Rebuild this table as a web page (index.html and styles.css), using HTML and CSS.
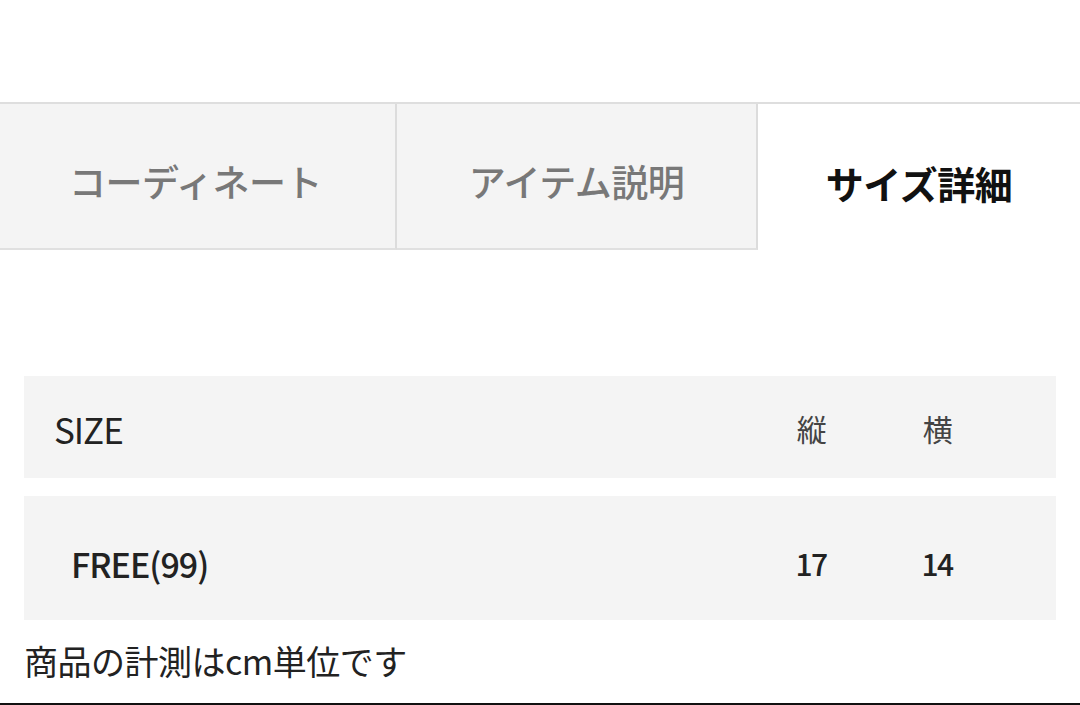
FILE: index.html
```html
<!DOCTYPE html>
<html lang="ja">
<head>
<meta charset="utf-8">
<link rel="stylesheet" href="styles.css">
</head>
<body>
<div class="page">
  <div class="top"></div>
  <div class="tabs">
    <div class="tab tab-1">コーディネート</div>
    <div class="tab tab-2">アイテム説明</div>
    <div class="tab tab-active">サイズ詳細</div>
  </div>
  <div class="content">
    <div class="table">
      <div class="row row-head">
        <div class="cell cell-name">SIZE</div>
        <div class="cell cell-num">縦</div>
        <div class="cell cell-num">横</div>
      </div>
      <div class="row row-body">
        <div class="cell cell-name cell-indent">FREE(99)</div>
        <div class="cell cell-num">17</div>
        <div class="cell cell-num">14</div>
      </div>
    </div>
    <p class="note">商品の計測はcm単位です</p>
  </div>
</div>
</body>
</html>
```
FILE: styles.css
```css
* { box-sizing: border-box; }
html, body { margin: 0; padding: 0; background: #fff; }
body {
  width: 1080px;
  height: 705px;
  overflow: hidden;
  font-family: "Noto Sans CJK JP", "Noto Sans", sans-serif;
  color: #222;
}
.page {
  height: 705px;
  display: flex;
  flex-direction: column;
  border-bottom: 2px solid #111;
}
.top {
  height: 104px;
  flex: none;
  border-bottom: 2px solid #dedede;
}
.tabs {
  display: flex;
  height: 146px;
  flex: none;
}
.tab {
  display: flex;
  align-items: center;
  justify-content: center;
  padding-top: 10px;
  font-size: 37px;
  font-weight: 500;
  letter-spacing: -0.5px;
  color: #787878;
  background: #f4f4f4;
  border-bottom: 2px solid #e0e0e0;
}
.tab-1 { width: 397px; border-right: 2px solid #dcdcdc; padding-right: 4px; }
.tab-2 { width: 361px; border-right: 2px solid #dcdcdc; padding-left: 0; }
.tab-active {
  flex: 1;
  background: #fff;
  border-bottom: none;
  color: #111;
  font-weight: 700;
  font-size: 38px;
  padding-right: 0;
}
.content {
  flex: 1;
  padding: 126px 24px 0 24px;
}
.table {
  width: 1032px;
  display: flex;
  flex-direction: column;
  gap: 18px;
}
.row {
  display: grid;
  grid-template-columns: 1fr 126px 126px 56px;
  align-items: center;
  background: #f4f4f4;
  font-size: 34px;
  font-weight: 500;
  letter-spacing: -1px;
}
.row-head { height: 102px; padding-top: 2px; }
.row-head .cell-name { font-weight: 400; font-size: 35px; }
.row-body { height: 124px; padding-top: 10px; }
.cell-name { padding-left: 30px; }
.cell-indent { padding-left: 47px; }
.cell-num { text-align: center; font-size: 30px; letter-spacing: -1.5px; }
.row-head .cell-num { color: #444; font-weight: 400; }
.note {
  margin: 16px 0 0 0;
  font-size: 34px;
  letter-spacing: -0.5px;
  color: #222;
}
```
